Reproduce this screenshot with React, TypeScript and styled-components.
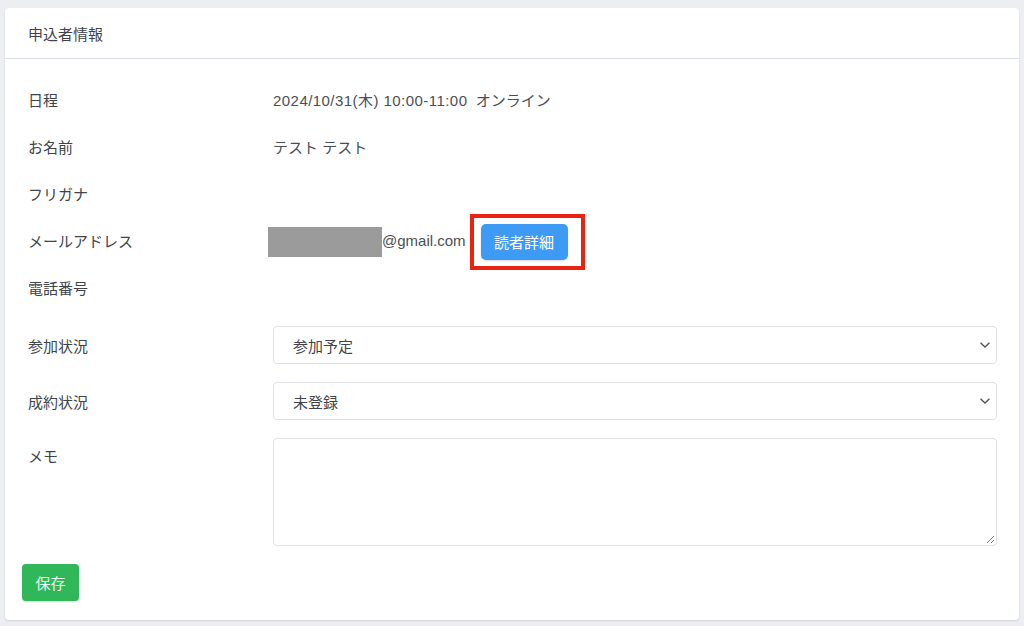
import React from "react";
import styled, { createGlobalStyle } from "styled-components";

const Global = createGlobalStyle`
  html, body { margin: 0; padding: 0; background: #eceef1; }
  body { font-family: "Liberation Sans", "Noto Sans CJK JP", sans-serif; color: #4a4f55; }
  * { box-sizing: border-box; }
`;

const Page = styled.div`
  width: 1024px;
  height: 626px;
  padding: 8px 5px 6px 5px;
`;

const Card = styled.div`
  background: #fff;
  border-radius: 4px;
  box-shadow: 0 1px 2px rgba(0, 0, 0, 0.12);
  height: 612px;
  display: flex;
  flex-direction: column;
`;

const CardHeader = styled.div`
  height: 51px;
  border-bottom: 1px solid #dcdfe3;
  padding: 0 23px;
  display: flex;
  align-items: center;
  font-size: 15px;
  color: #3f444a;
`;

const CardBody = styled.div`
  padding: 17px 22px 0 17px;
`;

const Grid = styled.div`
  display: grid;
  grid-template-columns: 251px 1fr;
`;

const Label = styled.div<{ $h: number; $top?: boolean; $mb?: number }>`
  height: ${(p) => p.$h}px;
  padding-left: 6px;
  font-size: 15px;
  color: #3f444a;
  display: flex;
  align-items: ${(p) => (p.$top ? "flex-start" : "center")};
  padding-top: ${(p) => (p.$top ? "7px" : "0")};
  margin-bottom: ${(p) => p.$mb ?? 0}px;
`;

const Value = styled.div<{ $h: number; $mb?: number }>`
  height: ${(p) => p.$h}px;
  font-size: 15px;
  color: #4a4f55;
  display: flex;
  align-items: center;
  margin-bottom: ${(p) => p.$mb ?? 0}px;
`;

const DateText = styled.span`
  letter-spacing: 0.45px;
`;

const Redacted = styled.span`
  display: inline-block;
  width: 114px;
  height: 30px;
  background: #9b9b9b;
  margin-left: -5px;
  margin-top: 2px;
`;

const Highlight = styled.span`
  display: inline-flex;
  align-items: center;
  justify-content: flex-start;
  width: 115px;
  height: 56px;
  border: 4px solid #e8230f;
  margin-left: 4px;
  margin-top: 2px;
  padding-left: 7px;
`;

const InfoButton = styled.button`
  width: 87px;
  height: 36px;
  border: none;
  border-radius: 5px;
  background: #3d9bf6;
  color: #fff;
  font-family: inherit;
  font-size: 15px;
  box-shadow: 0 1px 2px rgba(0, 0, 0, 0.15);
  padding: 0;
`;

const SelectBox = styled.div`
  width: 100%;
  height: 38px;
  border: 1px solid #dfe2e6;
  border-radius: 4px;
  display: flex;
  align-items: center;
  justify-content: space-between;
  padding: 0 5px 0 19px;
  font-size: 15px;
  color: #3f444a;
`;

const TextArea = styled.div`
  position: relative;
  width: 100%;
  height: 108px;
  border: 1px solid #dfe2e6;
  border-radius: 4px;
`;

const Grip = styled.svg`
  position: absolute;
  right: 1px;
  bottom: 1px;
`;

const SaveButton = styled.button`
  margin: 0;
  width: 57px;
  height: 37px;
  border: none;
  border-radius: 4px;
  background: #2fb75a;
  color: #eaf7ee;
  font-family: inherit;
  font-size: 15px;
  box-shadow: 0 1px 2px rgba(0, 0, 0, 0.15);
  padding: 0;
`;

const Chevron = () => (
  <svg width="12" height="8" viewBox="0 0 12 8">
    <path d="M1.5 1.8 L6 6 L10.5 1.8" fill="none" stroke="#555" strokeWidth="1.4" />
  </svg>
);

export default function App() {
  return (
    <>
      <Global />
      <Page>
        <Card>
          <CardHeader>申込者情報</CardHeader>
          <CardBody>
            <Grid>
              <Label $h={47}>日程</Label>
              <Value $h={47}>
                <DateText>2024/10/31(木) 10:00-11:00</DateText>&nbsp;&nbsp;オンライン
              </Value>
              <Label $h={47}>お名前</Label>
              <Value $h={47}>テスト テスト</Value>
              <Label $h={47}>フリガナ</Label>
              <Value $h={47}></Value>
              <Label $h={47}>メールアドレス</Label>
              <Value $h={47}>
                <Redacted />
                <span>@gmail.com</span>
                <Highlight>
                  <InfoButton>読者詳細</InfoButton>
                </Highlight>
              </Value>
              <Label $h={47} $mb={15}>電話番号</Label>
              <Value $h={47} $mb={15}></Value>
              <Label $h={38} $mb={18}>参加状況</Label>
              <Value $h={38} $mb={18}>
                <SelectBox>
                  参加予定
                  <Chevron />
                </SelectBox>
              </Value>
              <Label $h={38} $mb={18}>成約状況</Label>
              <Value $h={38} $mb={18}>
                <SelectBox>
                  未登録
                  <Chevron />
                </SelectBox>
              </Value>
              <Label $h={108} $top $mb={18}>メモ</Label>
              <Value $h={108} $mb={18}>
                <TextArea>
                  <Grip width="9" height="9" viewBox="0 0 9 9">
                    <path d="M8 1 L1 8 M8 5 L5 8" stroke="#777" strokeWidth="1" />
                  </Grip>
                </TextArea>
              </Value>
            </Grid>
            <SaveButton>保存</SaveButton>
          </CardBody>
        </Card>
      </Page>
    </>
  );
}
